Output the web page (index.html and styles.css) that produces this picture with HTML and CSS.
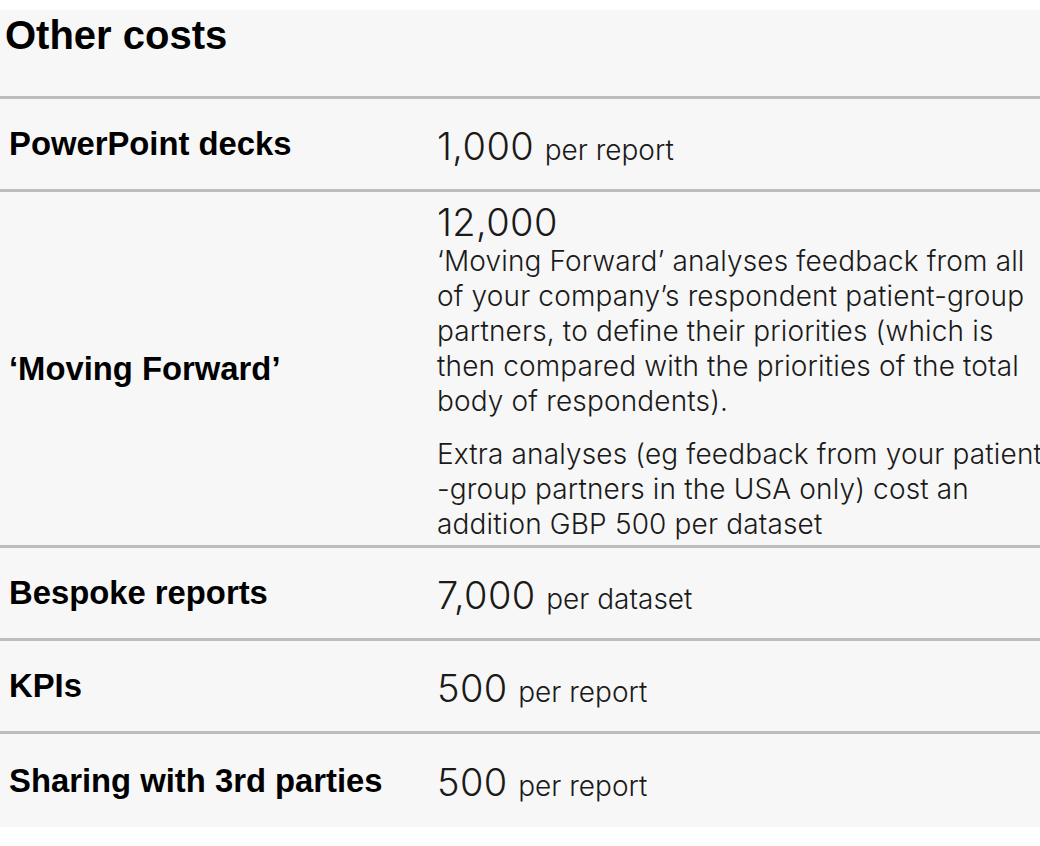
FILE: index.html
```html
<!DOCTYPE html>
<html lang="en">
<head>
<meta charset="utf-8">
<title>Other costs</title>
<link rel="stylesheet" href="styles.css">
</head>
<body>
<div class="page">
  <section class="panel">
    <h2 class="title">Other costs</h2>
    <div class="row">
      <div class="label">PowerPoint decks</div>
      <div class="value"><span class="amount">1,000</span> <span class="unit">per report</span></div>
    </div>
    <div class="row row-tall">
      <div class="label">‘Moving Forward’</div>
      <div class="value value-block">
        <div class="amount">12,000</div>
        <p class="desc">‘Moving Forward’ analyses feedback from all<br>of your company’s respondent patient-group<br>partners, to define their priorities (which is<br>then compared with the priorities of the total<br>body of respondents).</p>
        <p class="desc">Extra analyses (eg feedback from your patient<br>-group partners in the USA only) cost an<br>addition GBP 500 per dataset</p>
      </div>
    </div>
    <div class="row">
      <div class="label">Bespoke reports</div>
      <div class="value"><span class="amount">7,000</span> <span class="unit">per dataset</span></div>
    </div>
    <div class="row">
      <div class="label">KPIs</div>
      <div class="value"><span class="amount">500</span> <span class="unit">per report</span></div>
    </div>
    <div class="row row-last">
      <div class="label">Sharing with 3rd parties</div>
      <div class="value"><span class="amount">500</span> <span class="unit">per report</span></div>
    </div>
  </section>
</div>
</body>
</html>
```
FILE: styles.css
```css
html, body {
  margin: 0;
  padding: 0;
  background: #ffffff;
  overflow: hidden;
}
.page {
  padding-top: 10px;
  width: 1040px;
  overflow: hidden;
}
.panel {
  background: #f7f7f7;
  width: 1100px;
}
.title {
  margin: 0;
  height: 86px;
  box-sizing: border-box;
  padding: 2px 0 0 5px;
  font-family: "Liberation Sans", Arial, sans-serif;
  font-weight: bold;
  font-size: 40px;
  line-height: 46px;
  color: #000;
}
.row {
  display: grid;
  grid-template-columns: 437px 1fr;
  align-items: center;
  min-height: 90px;
  border-top: 3px solid #bdbdbd;
}
.row-last {
  min-height: 93px;
}
.label {
  padding-left: 9px;
  font-family: "Liberation Sans", Arial, sans-serif;
  font-weight: bold;
  font-size: 32.8px;
  color: #000;
}
.value {
  font-family: Inter, "Liberation Sans", sans-serif;
  font-weight: 300;
  color: #1a1a1a;
  white-space: nowrap;
  padding-top: 3px;
}
.amount {
  font-size: 38px;
  line-height: 44px;
  letter-spacing: 0.4px;
  margin-right: 6px;
}
.unit {
  font-size: 28px;
}
.value-block {
  align-self: stretch;
  padding: 8px 0 3px;
}
.desc {
  margin: 0;
  font-size: 28px;
  line-height: 35px;
  letter-spacing: 0.15px;
}
.desc + .desc {
  margin-top: 18px;
}
```
